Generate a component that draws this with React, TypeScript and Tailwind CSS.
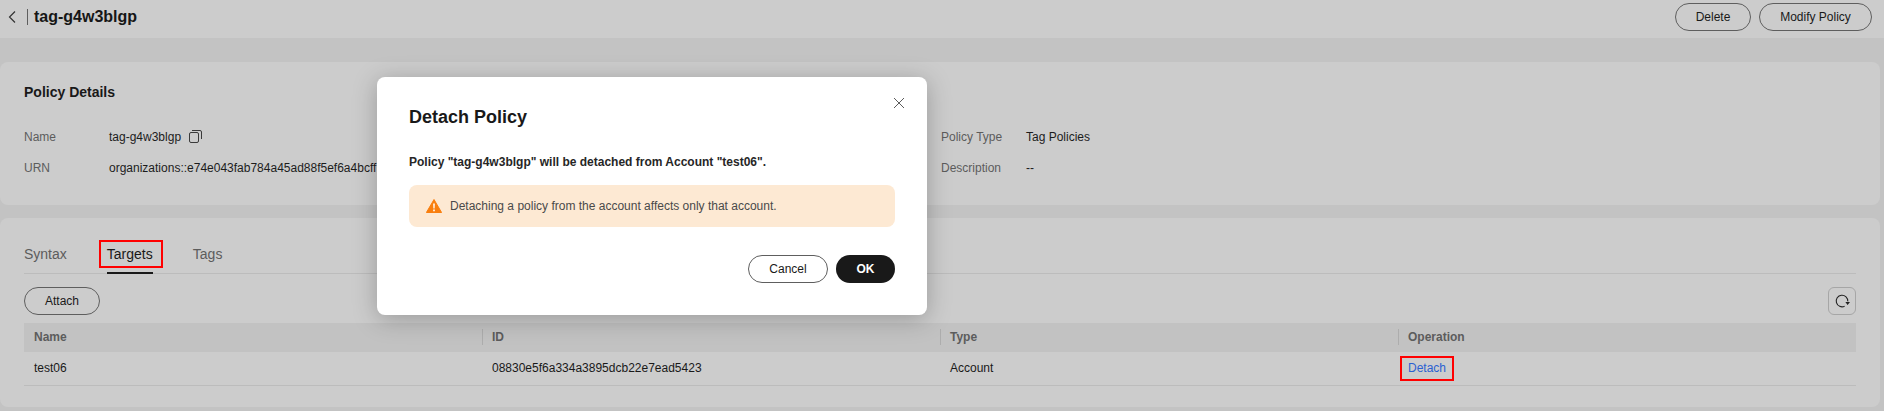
export default function App() {
  const field = (label: string, value: string, valueClass = "") => (
    <div className="flex h-[31px] items-center whitespace-nowrap">
      <span className="w-[85px] shrink-0 text-[#5c5c5c]">{label}</span>
      <span className={`text-[#1c1c1c] ${valueClass}`}>{value}</span>
    </div>
  );

  return (
    <div className="relative h-[411px] w-full overflow-hidden bg-[#c3c3c3] font-['Liberation_Sans',Arial,sans-serif] text-[12px] text-[#191919]">
      {/* Header */}
      <header className="flex h-[38px] items-start justify-between bg-[#cccccc] pl-[7px] pr-[12px] pt-[3px]">
        <div className="flex h-[28px] items-center">
          <svg width="10" height="14" viewBox="0 0 10 14" fill="none" stroke="#333" strokeWidth="1.2">
            <path d="M8 1.5 2.5 7 8 12.5" />
          </svg>
          <span className="ml-[10px] h-[16px] w-px bg-[#5e5e5e]" />
          <h1 className="ml-[6px] text-[16px] font-bold leading-none text-[#161616]">tag-g4w3blgp</h1>
        </div>
        <div className="flex gap-2">
          <button className="h-[28px] w-[76px] rounded-full border border-[#5e5e5e]">Delete</button>
          <button className="h-[28px] w-[113px] rounded-full border border-[#5e5e5e]">Modify Policy</button>
        </div>
      </header>

      <div className="pr-[4px] pt-[24px]">
        {/* Policy details */}
        <section className="h-[143px] rounded-lg bg-[#cccccc] px-[24px] pt-[21px]">
          <h2 className="text-[14px] font-bold leading-[18px]">Policy Details</h2>
          <div className="mt-[20px] flex">
            <div className="w-[917px] shrink-0">
              <div className="flex h-[31px] items-center whitespace-nowrap">
                <span className="w-[85px] shrink-0 text-[#5c5c5c]">Name</span>
                <span className="text-[#1c1c1c]">tag-g4w3blgp</span>
                <svg className="ml-[8px]" width="13" height="13" viewBox="0 0 13 13" fill="none" stroke="#3a3a3a" strokeWidth="1">
                  <rect x="0.5" y="2.5" width="9" height="10" rx="1.5" />
                  <path d="M3 .5h8a1.5 1.5 0 0 1 1.5 1.5v7" />
                </svg>
              </div>
              {field("URN", "organizations::e74e043fab784a45ad88f5ef6a4bcff")}
            </div>
            <div>
              {field("Policy Type", "Tag Policies")}
              {field("Description", "--")}
            </div>
          </div>
        </section>

        {/* Targets */}
        <section className="mt-[13px] h-[189px] rounded-lg bg-[#cccccc] px-[24px] pt-[23px]">
          <div className="flex h-[33px] gap-[40px] border-b border-[#bcbcbc] text-[14px] leading-[26px] text-[#5c5c5c]">
            <span className="h-[33px]">Syntax</span>
            <span className="relative h-[33px] w-[46px] whitespace-nowrap border-b-2 border-[#191919] text-[#191919]">
              Targets
              <span className="absolute -left-[8px] -top-[1px] h-[28px] w-[64px] border-2 border-[#ff0000]" />
            </span>
            <span className="h-[33px]">Tags</span>
          </div>
          <div className="mt-[13px] flex items-center justify-between">
            <button className="h-[28px] w-[76px] rounded-full border border-[#5e5e5e]">Attach</button>
            <button className="flex h-[28px] w-[28px] items-center justify-center rounded-md border border-[#a6a6a6]">
              <svg width="16" height="16" viewBox="0 0 16 16" fill="none" stroke="#222" strokeWidth="1.1">
                <path d="M10.6 13.2A5.8 5.8 0 1 1 13.8 8.4" />
                <path d="M11.4 9h4.6l-2.4 3z" fill="#222" stroke="none" />
              </svg>
            </button>
          </div>
          <div className="mt-[8px] grid h-[29px] grid-cols-4 items-center bg-[#c2c2c2] pb-[2px] font-bold text-[#5c5c5c]">
            <div className="pl-[10px]">Name</div>
            <div className="flex h-[16px] items-center border-l border-[#adadad] pl-[9px]">ID</div>
            <div className="flex h-[16px] items-center border-l border-[#adadad] pl-[9px]">Type</div>
            <div className="flex h-[16px] items-center border-l border-[#adadad] pl-[9px]">Operation</div>
          </div>
          <div className="grid h-[34px] grid-cols-4 items-center border-b border-[#bcbcbc] pb-[2px]">
            <div className="pl-[10px]">test06</div>
            <div className="pl-[10px]">08830e5f6a334a3895dcb22e7ead5423</div>
            <div className="pl-[10px]">Account</div>
            <div className="pl-[10px]">
              <span className="relative text-[#2b61d1]">
                Detach
                <span className="absolute -left-[8px] -top-[5px] h-[25px] w-[54px] border-2 border-[#ff0000]" />
              </span>
            </div>
          </div>
        </section>
      </div>

      {/* Modal */}
      <div className="absolute left-[377px] top-[77px] h-[238px] w-[550px] rounded-lg bg-white px-[32px] pt-[29px] shadow-[0_4px_24px_rgba(0,0,0,0.25)]">
        <svg className="absolute right-[22px] top-[20px]" width="12" height="12" viewBox="0 0 12 12" fill="none" stroke="#5c5c5c" strokeWidth="1">
          <path d="M1 1l10 10M11 1 1 11" />
        </svg>
        <h2 className="text-[18px] font-bold leading-[22px] text-[#191919]">Detach Policy</h2>
        <p className="mt-[26px] text-[12px] font-bold leading-[16px] text-[#262626]">
          Policy "tag-g4w3blgp" will be detached from Account "test06".
        </p>
        <div className="mt-[15px] flex h-[42px] w-[486px] items-center rounded-lg bg-[#fde9d3] pl-[17px] text-[#4a4a4a]">
          <svg width="16" height="14" viewBox="0 0 16 14">
            <path d="M8 .5 15.6 13.5H.4z" fill="#f97f0f" stroke="#f97f0f" strokeLinejoin="round" />
            <path d="M7.2 4.5h1.6l-.2 5H7.4zM7.2 10.6h1.6v1.6H7.2z" fill="#fff" />
          </svg>
          <span className="ml-[8px]">Detaching a policy from the account affects only that account.</span>
        </div>
        <div className="mt-[28px] flex justify-end gap-[8px]">
          <button className="h-[28px] w-[80px] rounded-full border border-[#5e5e5e] text-[#191919]">Cancel</button>
          <button className="h-[28px] w-[59px] rounded-full bg-[#191919] font-bold text-white">OK</button>
        </div>
      </div>
    </div>
  );
}
